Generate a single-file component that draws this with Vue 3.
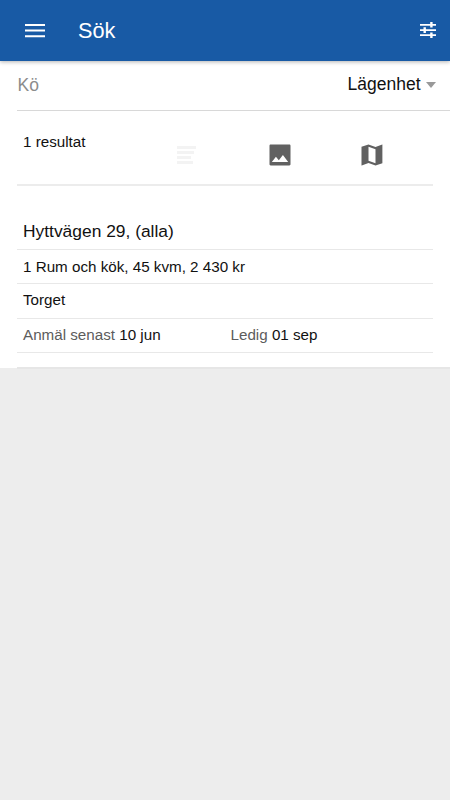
<template>
	<div class="page">
		<header class="toolbar">
			<svg class="icon-menu" viewBox="0 0 20 14">
				<path d="M0 0h20v2H0zM0 5.5h20v2H0zM0 11.3h20v2H0z" />
			</svg>
			<h1>Sök</h1>
			<svg class="icon-tune" viewBox="0 0 16 16">
				<path d="M0 2h16v1.7H0zM0 7.2h16v1.7H0zM0 12.3h16V14H0zM10.2 0h2.4v5.6h-2.4zM3.5 5.3h2.4v5.6H3.5zM10.2 10.4h2.4V16h-2.4z" />
			</svg>
		</header>
		<main class="content">
			<div class="filter">
				<span class="queue">Kö</span>
				<span class="type">Lägenhet</span>
				<span class="caret"></span>
			</div>
			<div class="summary">
				<span class="count">1 resultat</span>
				<svg class="icon-list" viewBox="0 0 20 18">
					<path d="M0 0h19v3H0zM0 5h17v3H0zM0 10h14v3H0zM0 15h16v3H0z" />
				</svg>
				<svg class="icon-view" viewBox="0 0 24 24">
					<path d="M21 20V4c0-.6-.4-1-1-1H4c-.6 0-1 .4-1 1v16c0 .6.4 1 1 1h16c.6 0 1-.4 1-1zM8.5 13.5l2.5 3.01L14.5 12l4.5 6H5l3.5-4.5z" />
				</svg>
				<svg class="icon-view icon-map" viewBox="0 0 24 24">
					<path d="M20.8 3L15 5.1 9 3 3 5v15.9l.2.1L9 18.9l6 2.1 5.9-2V3zM15 19l-6-2.11V5l6 2.11V19z" />
				</svg>
			</div>
			<section v-for="item in items" :key="item.address" class="item">
				<h2>{{ item.address }}</h2>
				<p class="info">{{ item.info }}</p>
				<p class="area">{{ item.area }}</p>
				<div class="dates">
					<span><label>Anmäl senast</label> {{ item.apply }}</span>
					<span><label>Ledig</label> {{ item.free }}</span>
				</div>
			</section>
			<div class="end"></div>
		</main>
	</div>
</template>

<script setup>
const items = [
	{
		address: 'Hyttvägen 29, (alla)',
		info: '1 Rum och kök, 45 kvm, 2 430 kr',
		area: 'Torget',
		apply: '10 jun',
		free: '01 sep',
	},
]
</script>

<style>
body {
	margin: 0;
	background: #ededed;
}
</style>

<style scoped>
.page {
	min-height: 100vh;
	background: #ededed;
	font-family: "Liberation Sans", Arial, sans-serif;
	font-size: 15.2px;
	color: #111;
}
.toolbar {
	position: relative;
	display: flex;
	align-items: center;
	box-sizing: border-box;
	height: 61px;
	padding: 0 14px 0 25px;
	background: #185aa5;
	box-shadow: 0 1px 4px rgba(0, 0, 0, 0.3);
	color: #fff;
	fill: #fff;
}
.toolbar h1 {
	flex: 1;
	margin: 0 0 0 33px;
	font-size: 21.7px;
	font-weight: normal;
}
.icon-menu {
	width: 20px;
	height: 14px;
}
.icon-tune {
	width: 16px;
	height: 16px;
	margin-bottom: 1px;
}
.content {
	height: 307px;
	background: #fff;
}
.filter {
	display: flex;
	align-items: center;
	box-sizing: border-box;
	height: 50px;
	margin-left: 17px;
	padding: 0 14px 0 0;
	border-bottom: 1px solid #d8d8d8;
	font-size: 17.5px;
}
.queue {
	flex: 1;
	padding-left: 0.5px;
	color: #8c8c8c;
}
.type {
	padding-bottom: 2px;
}
.caret {
	margin: 0 0 1px 5.5px;
	border: 5.5px solid transparent;
	border-top: 6px solid #999;
	border-bottom: 0;
}
.summary {
	display: flex;
	box-sizing: border-box;
	height: 75px;
	margin: 0 17px;
	padding-left: 6px;
	border-bottom: 2px solid #ececec;
	fill: #616161;
}
.count {
	width: 154px;
	padding-top: 22px;
}
.icon-list {
	width: 20px;
	height: 18px;
	margin-top: 35px;
	fill: #f3f3f3;
}
.icon-view {
	width: 28px;
	height: 28px;
	margin: 30px 0 0 68.5px;
}
.icon-map {
	margin-left: 64px;
}
.item {
	margin: 0 17px;
	padding-top: 27px;
}
.item h2,
.item p,
.dates {
	box-sizing: border-box;
	margin: 0;
	padding-left: 6px;
	border-bottom: 1px solid #e8e8e8;
}
.item h2 {
	height: 37px;
	font-size: 17.4px;
	font-weight: normal;
	line-height: 36px;
}
.item .info {
	height: 34px;
	line-height: 33px;
}
.item .area {
	height: 35px;
	line-height: 32px;
}
.dates {
	display: flex;
	height: 34px;
	line-height: 32px;
}
.dates span {
	flex: none;
	width: 207.5px;
}
.dates label {
	color: #5c5c5c;
}
.end {
	height: 14px;
	margin-left: 17px;
	border-bottom: 2px solid #e6e6e6;
}
</style>
